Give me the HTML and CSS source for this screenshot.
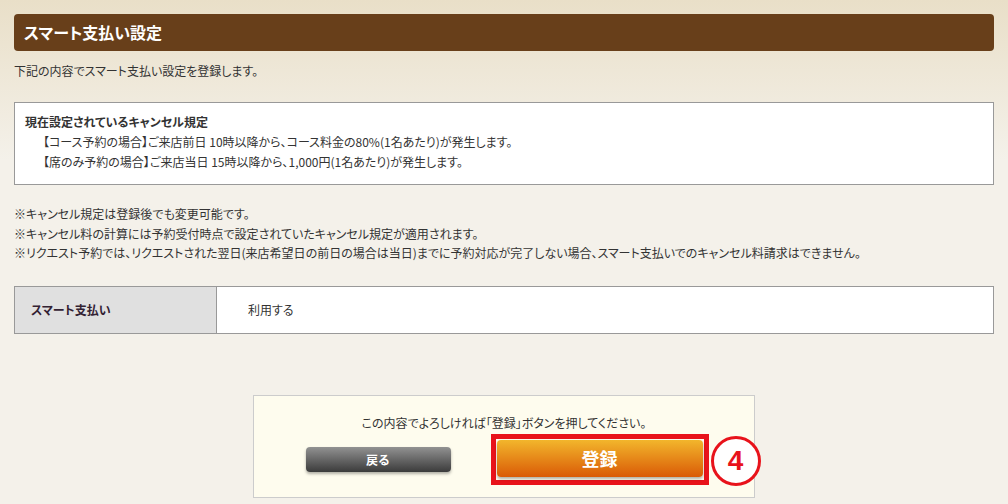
FILE: index.html
```html
<!DOCTYPE html>
<html lang="ja">
  <head>
    <meta charset="UTF-8" />
    <meta name="viewport" content="width=device-width, initial-scale=1.0" />
    <title>スマート支払い設定</title>
    <link rel="stylesheet" href="styles.css">
  </head>
  <body>
    <div class="page">
      <h1 class="page-title">スマート支払い設定</h1>
      <p class="lead">下記の内容でスマート支払い設定を登録します。</p>

      <div class="policy">
        <p class="policy-title">現在設定されているキャンセル規定</p>
        <p class="policy-line">【コース予約の場合】ご来店前日 10時以降から、コース料金の80%(1名あたり)が発生します。</p>
        <p class="policy-line">【席のみ予約の場合】ご来店当日 15時以降から、1,000円(1名あたり)が発生します。</p>
      </div>

      <ul class="notes">
        <li>※キャンセル規定は登録後でも変更可能です。</li>
        <li>※キャンセル料の計算には予約受付時点で設定されていたキャンセル規定が適用されます。</li>
        <li>※リクエスト予約では、リクエストされた翌日(来店希望日の前日の場合は当日)までに予約対応が完了しない場合、スマート支払いでのキャンセル料請求はできません。</li>
      </ul>

      <table class="setting">
        <tr>
          <th>スマート支払い</th>
          <td>利用する</td>
        </tr>
      </table>

      <div class="confirm">
        <p class="confirm-text">この内容でよろしければ「登録」ボタンを押してください。</p>
        <div class="confirm-buttons">
          <button class="btn-back">戻る</button>
          <div class="register-wrap">
            <button class="btn-register">登録</button>
            <span class="step-mark">4</span>
          </div>
        </div>
      </div>
    </div>
  </body>
</html>
```

FILE: styles.css
```css
body {
  margin: 0;
  font-family: "Noto Sans CJK JP", sans-serif;
  font-size: 12px;
  color: #333;
  font-feature-settings: "palt";
  background: linear-gradient(#e9dfc8, #f4f1ea 160px) no-repeat #f4f1ea;
  min-height: 504px;
}
.page {
  padding: 14px;
}
p {
  margin: 0;
}
.page-title {
  margin: 0;
  height: 37px;
  line-height: 37px;
  padding-left: 10px;
  background: #683f1a;
  border-radius: 4px;
  color: #fff;
  font-size: 16px;
  font-weight: bold;
}
.lead {
  margin-top: 11px;
  line-height: 18px;
}
.policy {
  margin-top: 22px;
  background: #fff;
  border: 1px solid #999;
  padding: 9px 10px 12px;
  line-height: 20px;
}
.policy-title {
  font-weight: bold;
}
.policy-line {
  padding-left: 18px;
}
.notes {
  list-style: none;
  margin: 19px 0 0;
  padding: 0;
  line-height: 19.5px;
}
.setting {
  margin-top: 23px;
  width: 100%;
  border-collapse: collapse;
  border: 1px solid #999;
  background: #fff;
}
.setting th,
.setting td {
  height: 46px;
  padding: 0;
  text-align: left;
  font-size: 12px;
}
.setting th {
  width: 185px;
  padding-left: 16px;
  background: #e0e0e0;
  border-right: 1px solid #999;
  font-weight: bold;
  color: #332233;
}
.setting td {
  padding-left: 31px;
}
.confirm {
  width: 500px;
  margin: 61px auto 0;
  background: #fefcee;
  border: 1px solid #ccc;
  padding: 18px 0 12px;
}
.confirm-text {
  text-align: center;
  line-height: 18px;
}
.confirm-buttons {
  margin-top: 2px;
  display: flex;
  justify-content: center;
  align-items: center;
  gap: 40px;
  padding-left: 6px;
}
.btn-back {
  width: 145px;
  height: 25px;
  border: 0;
  border-radius: 4px;
  background: linear-gradient(#929292, #3b3b3b);
  box-shadow: 0 2px 3px rgba(0, 0, 0, 0.3);
  color: #fff;
  font-family: inherit;
  font-size: 12px;
  font-weight: bold;
  padding: 0;
}
/* red frame around the register button */
.register-wrap {
  position: relative;
  border: 5px solid #e8131b;
  padding: 1px 1px 3px;
}
.btn-register {
  display: block;
  width: 206px;
  height: 37px;
  border: 0;
  border-radius: 4px;
  background: linear-gradient(#f2b62c, #da5a06);
  box-shadow: 0 2px 3px rgba(0, 0, 0, 0.3);
  color: #fff;
  font-family: inherit;
  font-size: 18px;
  font-weight: bold;
  padding: 0;
}
.step-mark {
  position: absolute;
  left: 215px;
  top: -3px;
  width: 44px;
  height: 44px;
  border: 3px solid #e8131b;
  border-radius: 50%;
  background: #fff;
  color: #e8131b;
  font-family: "Liberation Sans", sans-serif;
  font-size: 28px;
  font-weight: bold;
  line-height: 44px;
  text-align: center;
}
```
